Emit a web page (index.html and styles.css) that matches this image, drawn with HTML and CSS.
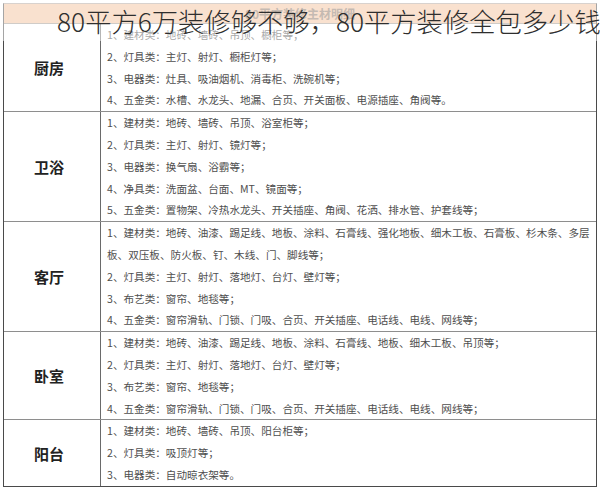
FILE: index.html
```html
<!DOCTYPE html>
<html lang="zh-CN">
<head>
<meta charset="utf-8">
<title>80平方6万装修够不够</title>
<link rel="stylesheet" href="styles.css">
</head>
<body>
<div class="sheet">
  <div class="sheet-title">80平方6万装修够不够，80平方装修全包多少钱</div>
  <div class="materials">
    <div class="materials-head">80平方装修主材明细</div>
    <div class="room">
      <div class="room-name">厨房</div>
      <div class="room-items">
        <p>1、建材类：地砖、墙砖、吊顶、橱柜等；</p>
        <p>2、灯具类：主灯、射灯、橱柜灯等；</p>
        <p>3、电器类：灶具、吸油烟机、消毒柜、洗碗机等；</p>
        <p>4、五金类：水槽、水龙头、地漏、合页、开关面板、电源插座、角阀等。</p>
      </div>
    </div>
    <div class="room">
      <div class="room-name">卫浴</div>
      <div class="room-items">
        <p>1、建材类：地砖、墙砖、吊顶、浴室柜等；</p>
        <p>2、灯具类：主灯、射灯、镜灯等；</p>
        <p>3、电器类：换气扇、浴霸等；</p>
        <p>4、净具类：洗面盆、台面、MT、镜面等；</p>
        <p>5、五金类：置物架、冷热水龙头、开关插座、角阀、花洒、排水管、护套线等；</p>
      </div>
    </div>
    <div class="room">
      <div class="room-name">客厅</div>
      <div class="room-items">
        <p>1、建材类：地砖、油漆、踢足线、地板、涂料、石膏线、强化地板、细木工板、石膏板、杉木条、多层板、双压板、防火板、钉、木线、门、脚线等；</p>
        <p>2、灯具类：主灯、射灯、落地灯、台灯、壁灯等；</p>
        <p>3、布艺类：窗帘、地毯等；</p>
        <p>4、五金类：窗帘滑轨、门锁、门吸、合页、开关插座、电话线、电线、网线等；</p>
      </div>
    </div>
    <div class="room">
      <div class="room-name">卧室</div>
      <div class="room-items">
        <p>1、建材类：地砖、油漆、踢足线、地板、涂料、石膏线、地板、细木工板、吊顶等；</p>
        <p>2、灯具类：主灯、射灯、落地灯、台灯、壁灯等；</p>
        <p>3、布艺类：窗帘、地毯等；</p>
        <p>4、五金类：窗帘滑轨、门锁、门吸、合页、开关插座、电话线、电线、网线等；</p>
      </div>
    </div>
    <div class="room">
      <div class="room-name">阳台</div>
      <div class="room-items">
        <p>1、建材类：地砖、墙砖、吊顶、阳台柜等；</p>
        <p>2、灯具类：吸顶灯等；</p>
        <p>3、电器类：自动晾衣架等。</p>
      </div>
    </div>
  </div>
</div>
</body>
</html>
```

FILE: styles.css
```css
* {
  box-sizing: border-box;
}

html,
body {
  margin: 0;
  padding: 0;
  background: #ffffff;
}

.sheet {
  position: relative;
  width: 600px;
  height: 489px;
  overflow: hidden;
  padding: 3px 4px 0 3px;
  font-family: "Noto Sans CJK SC", "Noto Sans", sans-serif;
}

.sheet-title {
  position: absolute;
  top: 0;
  left: 0;
  right: 0;
  height: 41px;
  padding-left: 57px;
  line-height: 42px;
  font-size: 26.3px;
  font-weight: 300;
  color: #2e2e2e;
  white-space: nowrap;
  background: rgba(255, 255, 255, 0.5);
}

.materials {
  width: 594px;
  border: 1px solid #4a4a4a;
  border-top-color: #b0a49c;
}

.materials-head {
  height: 20px;
  line-height: 20px;
  text-align: center;
  font-size: 12px;
  font-weight: 700;
  color: #8a7464;
  background: #f3c29f;
  border-bottom: 1px solid #a09890;
}

.room {
  display: grid;
  grid-template-columns: 97px 1fr;
  border-top: 1px solid #8e8e8e;
}

.materials-head + .room {
  border-top: none;
}

.room-name {
  display: flex;
  align-items: center;
  justify-content: center;
  border-right: 1px solid #6a6a6a;
  padding-right: 6px;
  font-size: 15px;
  font-weight: 700;
  color: #222222;
}

.room-items {
  padding-left: 6px;
  padding-right: 4px;
}

.room-items p {
  margin: 0;
  font-size: 10.6px;
  line-height: 21.8px;
  color: #4e4e4e;
}
```
